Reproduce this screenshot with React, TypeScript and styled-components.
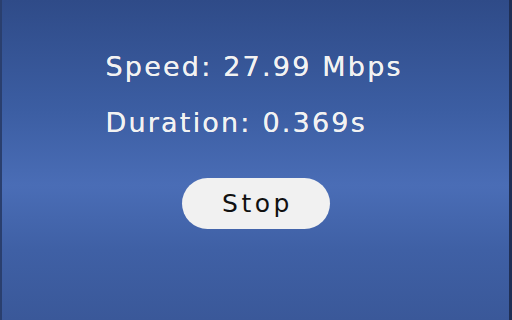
import React from 'react';
import styled, { createGlobalStyle } from 'styled-components';

const Global = createGlobalStyle`
  html, body {
    margin: 0;
    padding: 0;
    width: 512px;
    height: 320px;
    overflow: hidden;
  }
`

const Screen = styled.div`
  box-sizing: border-box;
  width: 512px;
  height: 320px;
  display: flex;
  justify-content: center;
  padding-top: 50px;
  background: linear-gradient(180deg, #2f4b88 0%, #3c5ea3 35%, #4a6db6 58%, #3f60a5 78%, #3a5899 100%);
  border-left: 2px solid #2a3f6e;
  border-right: 3px solid #1f2f55;
  font-family: 'DejaVu Sans', sans-serif;
`

const Panel = styled.div`
  display: flex;
  flex-direction: column;
  width: 300px;
`

const Stat = styled.div`
  color: #f2f2f2;
  font-size: 27px;
  line-height: 34px;
  letter-spacing: 2.2px;
  margin-bottom: 22px;
  white-space: nowrap;
  text-shadow: 0 0 0.4px #f2f2f2;
`

const StopButton = styled.button`
  align-self: center;
  margin-top: 16px;
  width: 148px;
  height: 51px;
  padding: 0 0 0 4px;
  border: none;
  border-radius: 26px;
  background: #f1f1f1;
  color: #111;
  font-family: 'DejaVu Sans', sans-serif;
  font-size: 25px;
  letter-spacing: 3.5px;
  cursor: pointer;
`

const App = () => {
  const speed = 27.99
  const duration = 0.369
  return (
    <>
      <Global />
      <Screen>
        <Panel>
          <Stat>Speed: {speed.toFixed(2)} Mbps</Stat>
          <Stat>Duration: {duration.toFixed(3)}s</Stat>
          <StopButton>Stop</StopButton>
        </Panel>
      </Screen>
    </>
  )
}

export default App
